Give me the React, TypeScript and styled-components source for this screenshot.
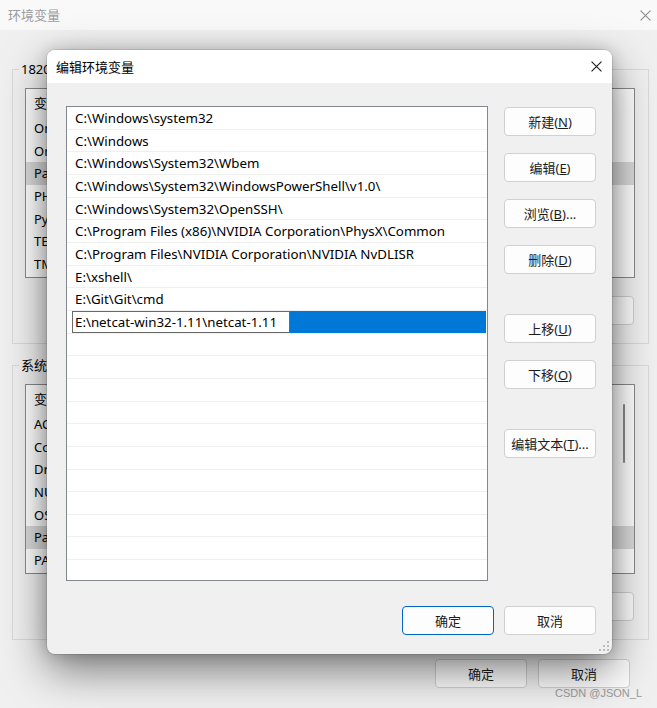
import React from "react";
import styled, { createGlobalStyle } from "styled-components";

const FONT = `"Noto Sans", "Noto Sans CJK SC", sans-serif`;

const GlobalStyle = createGlobalStyle`
  html, body { margin: 0; padding: 0; }
  body { font-family: ${FONT}; font-size: 13px; color: #000; background: #f0f0f0; }
  * { box-sizing: border-box; }
`;

/* ---------- background window ---------- */
const Window = styled.div`
  position: relative;
  width: 657px;
  height: 708px;
  overflow: hidden;
  background: #f0f0f0;
  display: flex;
  flex-direction: column;
`;

const TitleBar = styled.div`
  height: 30px;
  flex: none;
  display: flex;
  align-items: center;
  justify-content: space-between;
  padding-left: 8px;
  background: #f9f9f9;
`;

const WinTitle = styled.span<{ $inactive?: boolean }>`
  font-size: 13px;
  line-height: 16px;
  color: ${(p) => (p.$inactive ? "#9c9c9c" : "#000")};
`;

const CloseBtn = styled.div<{ $w: number }>`
  width: ${(p) => p.$w}px;
  height: 100%;
  display: flex;
  align-items: center;
  justify-content: center;
`;

const WinBody = styled.div`
  display: flex;
  flex-direction: column;
  padding: 31px 8px 0 12px;
`;

const Group = styled.fieldset`
  margin: 0;
  padding: 11px 13px 18px 12px;
  border: 1px solid #d9d9d9;
  min-width: 0;
  & + & {
    margin-top: 13px;
  }
`;

const Legend = styled.legend`
  margin-left: -6px;
  padding: 0 2px;
  font-size: 13px;
  line-height: 16px;
`;

const BgList = styled.div`
  position: relative;
  height: 190px;
  background: #fff;
  border: 1px solid #8a8a8a;
  overflow: hidden;
`;

const BgHeader = styled.div`
  height: 28px;
  line-height: 28px;
  padding-left: 8px;
  white-space: nowrap;
`;

const BgRow = styled.div<{ $selected?: boolean }>`
  height: 22.7px;
  line-height: 22.7px;
  padding-left: 8px;
  white-space: nowrap;
  background: ${(p) => (p.$selected ? "#dadada" : "transparent")};
`;

const ScrollThumb = styled.div`
  position: absolute;
  right: 9px;
  top: 19px;
  width: 2px;
  height: 59px;
  border-radius: 1px;
  background: #8a8a8a;
`;

const BgButtons = styled.div`
  display: flex;
  justify-content: flex-end;
  gap: 11px;
  margin-top: 18px;
  padding-right: 1px;
`;

const Button = styled.div<{ $default?: boolean; $w?: number }>`
  width: ${(p) => p.$w ?? 92}px;
  height: 29px;
  flex: none;
  display: flex;
  align-items: center;
  justify-content: center;
  background: #fdfdfd;
  border: 1px solid ${(p) => (p.$default ? "#0067c0" : "#d0d0d0")};
  border-radius: 4px;
  font-size: 13px;
  line-height: 16px;
  color: #1b1b1b;
  white-space: nowrap;
  u {
    text-decoration: underline;
    text-underline-offset: 1px;
  }
`;

const BottomButtons = styled.div`
  display: flex;
  justify-content: flex-end;
  gap: 11px;
  margin-top: 19px;
  padding-right: 19px;
`;

const Watermark = styled.div`
  position: absolute;
  right: 15px;
  bottom: 8px;
  font-family: "Liberation Sans", sans-serif;
  font-size: 11px;
  line-height: 13px;
  color: #9a9a9a;
`;

/* ---------- foreground dialog ---------- */
const Dialog = styled.div`
  position: absolute;
  left: 47px;
  top: 50px;
  width: 565px;
  height: 604px;
  background: #f0f0f0;
  border-radius: 8px;
  overflow: hidden;
  box-shadow: 0 0 0 1px rgba(0, 0, 0, 0.1), 0 0 16px rgba(0, 0, 0, 0.18),
    0 16px 44px rgba(0, 0, 0, 0.5);
  display: flex;
  flex-direction: column;
`;

const DialogTitleBar = styled.div`
  height: 33px;
  flex: none;
  display: flex;
  align-items: center;
  justify-content: space-between;
  padding-left: 9px;
  background: #fff;
`;

const DialogBody = styled.div`
  position: relative;
  flex: 1;
  display: flex;
  flex-direction: column;
  padding: 23px 16px 0 19px;
`;

const MainRow = styled.div`
  display: flex;
  gap: 16px;
`;

const PathList = styled.div`
  width: 422px;
  height: 475px;
  background: #fff;
  border: 1px solid #828790;
  overflow: hidden;
  font-size: 13.3px;
`;

const PathRow = styled.div<{ $editing?: boolean }>`
  height: 22.67px;
  display: flex;
  align-items: stretch;
  padding-left: ${(p) => (p.$editing ? 5 : 8)}px;
  border-bottom: 1px solid #efefef;
  line-height: 23px;
  white-space: nowrap;
`;

const EditBox = styled.div`
  width: 218px;
  flex: none;
  border: 1px solid #6a6a6a;
  background: #fff;
  padding-left: 2px;
  line-height: 20px;
`;

const SelectionFill = styled.div`
  flex: 1;
  background: #0078d7;
  margin-right: 1px;
`;

const ButtonColumn = styled.div`
  display: flex;
  flex-direction: column;
  gap: 17px;
  padding-top: 1px;
`;

const ColButton = styled(Button)<{ $spaced?: boolean }>`
  margin-top: ${(p) => (p.$spaced ? 23 : 0)}px;
`;

const Footer = styled.div`
  display: flex;
  justify-content: flex-end;
  gap: 10px;
  margin-top: 25px;
`;

const Grip = styled.svg`
  position: absolute;
  right: 3px;
  bottom: 3px;
`;

const XIcon = ({ color, size }: { color: string; size: number }) => (
  <svg width={size} height={size} viewBox="0 0 10 10">
    <path d="M0.5 0.5 L9.5 9.5 M9.5 0.5 L0.5 9.5" stroke={color} strokeWidth="1" fill="none" />
  </svg>
);

const GripIcon = () => (
  <Grip width="10" height="10" viewBox="0 0 10 10">
    {[
      [8, 0],
      [4, 4],
      [8, 4],
      [0, 8],
      [4, 8],
      [8, 8],
    ].map(([x, y], i) => (
      <rect key={i} x={x} y={y} width="2" height="2" fill="#bcbcbc" />
    ))}
  </Grip>
);

const userVars = ["OneDrive", "OneDriveConsumer", "Path", "PHPSTORM", "PyCharm", "TEMP", "TMP"];
const sysVars = ["ACSetupSvcPort", "ComSpec", "DriverData", "NUMBER_OF_PROCESSORS", "OS", "Path", "PATHEXT"];

const paths = [
  "C:\\Windows\\system32",
  "C:\\Windows",
  "C:\\Windows\\System32\\Wbem",
  "C:\\Windows\\System32\\WindowsPowerShell\\v1.0\\",
  "C:\\Windows\\System32\\OpenSSH\\",
  "C:\\Program Files (x86)\\NVIDIA Corporation\\PhysX\\Common",
  "C:\\Program Files\\NVIDIA Corporation\\NVIDIA NvDLISR",
  "E:\\xshell\\",
  "E:\\Git\\Git\\cmd",
];

const editing = "E:\\netcat-win32-1.11\\netcat-1.11";

export default function App() {
  const empty = Array.from({ length: 11 });
  return (
    <>
      <GlobalStyle />
      <Window>
        <TitleBar>
          <WinTitle $inactive>环境变量</WinTitle>
          <CloseBtn $w={24}>
            <XIcon color="#8c8c8c" size={11} />
          </CloseBtn>
        </TitleBar>
        <WinBody>
          <Group>
            <Legend>18200的用户变量(U)</Legend>
            <BgList>
              <BgHeader>变量</BgHeader>
              {userVars.map((v) => (
                <BgRow key={v} $selected={v === "Path"}>
                  {v}
                </BgRow>
              ))}
            </BgList>
            <BgButtons>
              <Button>新建(N)...</Button>
              <Button>编辑(E)...</Button>
              <Button>删除(D)</Button>
            </BgButtons>
          </Group>
          <Group>
            <Legend>系统变量(S)</Legend>
            <BgList>
              <BgHeader>变量</BgHeader>
              {sysVars.map((v) => (
                <BgRow key={v} $selected={v === "Path"}>
                  {v}
                </BgRow>
              ))}
              <ScrollThumb />
            </BgList>
            <BgButtons>
              <Button>新建(W)...</Button>
              <Button>编辑(I)...</Button>
              <Button>删除(L)</Button>
            </BgButtons>
          </Group>
          <BottomButtons>
            <Button>确定</Button>
            <Button>取消</Button>
          </BottomButtons>
        </WinBody>
        <Watermark>CSDN @JSON_L</Watermark>

        <Dialog>
          <DialogTitleBar>
            <WinTitle>编辑环境变量</WinTitle>
            <CloseBtn $w={32}>
              <XIcon color="#1a1a1a" size={11} />
            </CloseBtn>
          </DialogTitleBar>
          <DialogBody>
            <MainRow>
              <PathList>
                {paths.map((p) => (
                  <PathRow key={p}>{p}</PathRow>
                ))}
                <PathRow $editing>
                  <EditBox>{editing}</EditBox>
                  <SelectionFill />
                </PathRow>
                {empty.map((_, i) => (
                  <PathRow key={"e" + i} />
                ))}
              </PathList>
              <ButtonColumn>
                <ColButton>
                  新建(<u>N</u>)
                </ColButton>
                <ColButton>
                  编辑(<u>E</u>)
                </ColButton>
                <ColButton>
                  浏览(<u>B</u>)...
                </ColButton>
                <ColButton>
                  删除(<u>D</u>)
                </ColButton>
                <ColButton $spaced>
                  上移(<u>U</u>)
                </ColButton>
                <ColButton>
                  下移(<u>O</u>)
                </ColButton>
                <ColButton $spaced>
                  编辑文本(<u>T</u>)...
                </ColButton>
              </ButtonColumn>
            </MainRow>
            <Footer>
              <Button $default>确定</Button>
              <Button>取消</Button>
            </Footer>
            <GripIcon />
          </DialogBody>
        </Dialog>
      </Window>
    </>
  );
}
